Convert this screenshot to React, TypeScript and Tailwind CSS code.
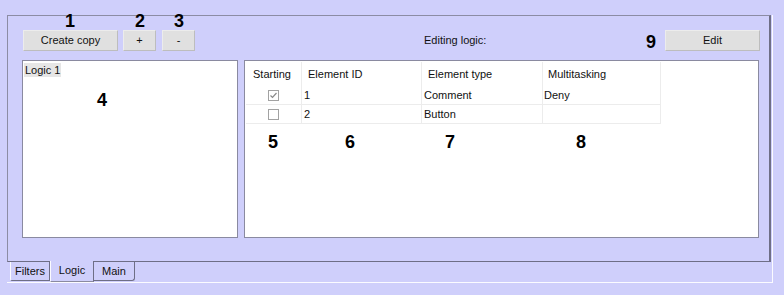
import React from 'react';

const rows = [
  { checked: true, id: '1', type: 'Comment', multi: 'Deny' },
  { checked: false, id: '2', type: 'Button', multi: '' },
];

const marks = [
  { n: '1', x: 70, y: 21 },
  { n: '2', x: 140, y: 21 },
  { n: '3', x: 179, y: 21 },
  { n: '4', x: 102, y: 100 },
  { n: '5', x: 273, y: 142 },
  { n: '6', x: 350, y: 142 },
  { n: '7', x: 450, y: 142 },
  { n: '8', x: 581, y: 142 },
  { n: '9', x: 651, y: 42 },
];

function Check({ on }: { on: boolean }) {
  return (
    <svg width="11" height="11" viewBox="0 0 11 11">
      <rect x="0.5" y="0.5" width="10" height="10" fill="#fff" stroke="#a2a2a2" />
      {on && <path d="M2.5 5.5 L4.5 7.5 L8.5 3" fill="none" stroke="#8a8a8a" strokeWidth="1.2" />}
    </svg>
  );
}

function Btn({ children, w }: { children: React.ReactNode; w: string }) {
  return (
    <div className={`${w} h-[21px] flex items-center justify-center bg-[#e0e0e0] border border-t-[#ececec] border-l-[#ececec] border-r-[#bdbdbd] border-b-[#bdbdbd] text-[#111]`}>
      {children}
    </div>
  );
}

export default function App() {
  return (
    <div className="relative w-[784px] h-[295px] bg-[#cfcffb] font-['Liberation_Sans',Arial,sans-serif] text-[11px] text-[#111] overflow-hidden">
      <div className="ml-[7px] pt-[15px] w-[766px]">
        <div className="w-[766px] h-[268px] border-r border-b border-[#fbfbff] flex flex-col">
          {/* tab page */}
          <div className="h-[248px] w-[764px] border-t border-l border-[#8c8ca4] border-r-2 border-b border-r-[#6e6e86] border-b-[#6e6e86] pl-[14px] pr-[9px] pt-[14px]">
            <div className="flex items-center h-[21px]">
              <div className="ml-[1px]"><Btn w="w-[95px]">Create copy</Btn></div>
              <div className="ml-[5px]"><Btn w="w-[33px]">+</Btn></div>
              <div className="ml-[6px]"><Btn w="w-[33px]">-</Btn></div>
              <span className="ml-[229px]">Editing logic:</span>
              <div className="ml-auto"><Btn w="w-[95px]">Edit</Btn></div>
            </div>

            <div className="flex gap-[6px] mt-[9px] h-[178px]">
              <div className="w-[216px] h-full bg-white border border-[#8a8aa0] p-[1px]">
                <div className="inline-block bg-[#e6e6e6] px-[1px] leading-[14px]">Logic 1</div>
              </div>
              <div className="w-[515px] h-full bg-white border border-[#8a8aa0] pl-[1px] pt-[1px]">
                <div className="grid grid-cols-[56px_120px_121px_118px] w-[415px]">
                  <div className="h-[24px] flex items-center pl-[7px] border-r border-[#ececec]">Starting</div>
                  <div className="h-[24px] flex items-center pl-[6px] border-r border-[#ececec]">Element ID</div>
                  <div className="h-[24px] flex items-center pl-[6px] border-r border-[#ececec]">Element type</div>
                  <div className="h-[24px] flex items-center pl-[5px] border-r border-[#ececec]">Multitasking</div>
                  {rows.map((r) => (
                    <React.Fragment key={r.id}>
                      <div className="h-[19px] flex items-center justify-center border-r border-b border-[#ececec]">
                        <Check on={r.checked} />
                      </div>
                      <div className="h-[19px] flex items-center pl-[2px] border-r border-b border-[#ececec]">{r.id}</div>
                      <div className="h-[19px] flex items-center pl-[2px] border-r border-b border-[#ececec]">{r.type}</div>
                      <div className="h-[19px] flex items-center pl-[1px] border-r border-b border-[#ececec]">{r.multi}</div>
                    </React.Fragment>
                  ))}
                </div>
              </div>
            </div>
          </div>

          {/* tabs at bottom */}
          <div className="flex pl-[3px]">
            <div className="h-[19px] w-[40px] flex items-center justify-center border-l border-[#fbfbff] border-r border-b border-r-[#6e6e86] border-b-[#6e6e86] rounded-bl-[2px]">Filters</div>
            <div className="relative -mt-[1px] h-[21px] w-[44px] flex items-center justify-center bg-[#cfcffb] border-l border-[#fbfbff] border-r border-b border-r-[#6e6e86] border-b-[#8a8aa0] z-10 pb-[2px]">Logic</div>
            <div className="h-[19px] w-[41px] flex items-center justify-center border-r border-b border-r-[#6e6e86] border-b-[#6e6e86] rounded-br-[3px]">Main</div>
          </div>
        </div>
      </div>

      {marks.map((m) => (
        <span
          key={m.n}
          className="absolute -translate-x-1/2 -translate-y-1/2 font-bold text-[18px] leading-none text-black"
          style={{ left: m.x, top: m.y }}
        >
          {m.n}
        </span>
      ))}
    </div>
  );
}
